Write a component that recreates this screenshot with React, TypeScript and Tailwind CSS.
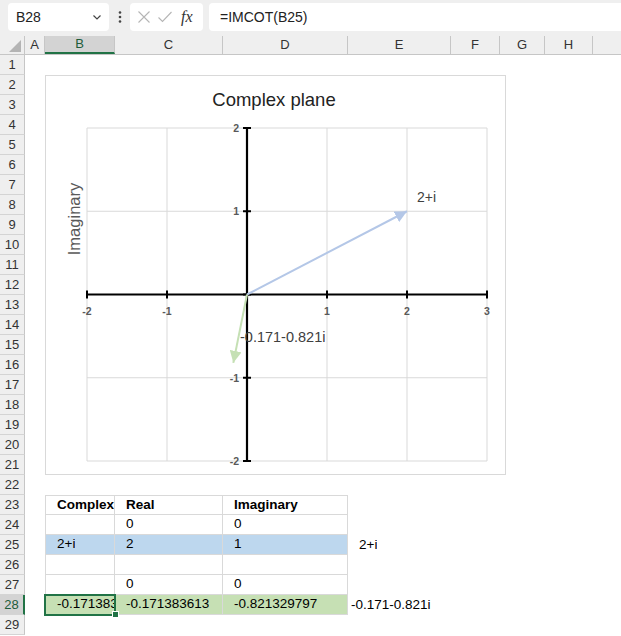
import React from "react";

const COLS = [
  { key: "A", w: 20 },
  { key: "B", w: 70 },
  { key: "C", w: 108 },
  { key: "D", w: 125 },
  { key: "E", w: 103 },
  { key: "F", w: 49 },
  { key: "G", w: 45 },
  { key: "H", w: 48 },
  { key: "I", w: 72 },
];

const colW: Record<string, string> = {
  A: "w-[20px]",
  B: "w-[70px]",
  C: "w-[108px]",
  D: "w-[125px]",
  E: "w-[103px]",
  F: "w-[49px]",
  G: "w-[45px]",
  H: "w-[48px]",
  I: "w-[72px]",
};

type Cell = { text?: string; bold?: boolean; pad?: string };
type Row = { cells: Record<string, Cell>; fill?: string; table?: boolean };

const rows: Record<number, Row> = {
  23: { table: true, cells: { B: { text: "Complex", bold: true }, C: { text: "Real", bold: true }, D: { text: "Imaginary", bold: true } } },
  24: { table: true, cells: { C: { text: "0" }, D: { text: "0" } } },
  25: { table: true, fill: "bg-[#bdd7ee]", cells: { B: { text: "2+i" }, C: { text: "2" }, D: { text: "1" }, E: { text: "2+i" } } },
  26: { table: true, cells: {} },
  27: { table: true, cells: { C: { text: "0" }, D: { text: "0" } } },
  28: {
    table: true,
    fill: "bg-[#c6e0b4]",
    cells: { B: { text: "-0.171383613" }, C: { text: "-0.171383613" }, D: { text: "-0.821329797" }, E: { text: "-0.171-0.821i", pad: "pl-[3px]" } },
  },
};

function FormulaBar() {
  return (
    <div className="flex h-[36px] items-start gap-0 bg-[#efefef] pt-[3px]">
      <div className="ml-[8px] flex h-[28px] w-[101px] items-center justify-between rounded-[4px] bg-white pl-[8px] pr-[6px] text-[14px] text-[#222]">
        <span>B28</span>
        <svg width="12" height="12" viewBox="0 0 12 12">
          <path d="M2.5 4.5 L6 8 L9.5 4.5" fill="none" stroke="#444" strokeWidth="1.2" />
        </svg>
      </div>
      <div className="flex h-[28px] w-[21px] items-center justify-center">
        <svg width="4" height="14" viewBox="0 0 4 14">
          <circle cx="2" cy="2.5" r="1.3" fill="#444" />
          <circle cx="2" cy="7" r="1.3" fill="#444" />
          <circle cx="2" cy="11.5" r="1.3" fill="#444" />
        </svg>
      </div>
      <div className="flex h-[28px] w-[73px] items-center rounded-[4px] bg-white pl-[7px]">
        <svg width="14" height="14" viewBox="0 0 14 14">
          <path d="M1.5 1.5 L12.5 12.5 M12.5 1.5 L1.5 12.5" stroke="#b5b5b5" strokeWidth="1.1" />
        </svg>
        <svg width="16" height="14" viewBox="0 0 16 14" className="ml-[6px]">
          <path d="M1.5 7.5 L5.5 11.5 L14.5 2" fill="none" stroke="#b5b5b5" strokeWidth="1.1" />
        </svg>
        <span className="ml-[8px] font-['Liberation_Serif',serif] text-[16px] italic text-[#333]">fx</span>
      </div>
      <div className="ml-[6px] flex h-[28px] flex-1 items-center rounded-l-[4px] bg-white pl-[11px] text-[14px] text-[#222]">
        =IMCOT(B25)
      </div>
    </div>
  );
}

function HeaderRow() {
  return (
    <div className="flex h-[19px] border-b border-[#c6c6c6] bg-[#efefef] text-[13px] text-[#333]">
      <div className="relative w-[25px] shrink-0 border-r border-[#c6c6c6]">
        <svg width="12" height="12" viewBox="0 0 12 12" className="absolute bottom-[2px] right-[3px]">
          <polygon points="12,0 12,12 0,12" fill="#b4b4b4" />
        </svg>
      </div>
      {COLS.map((c) => (
        <div
          key={c.key}
          className={`${colW[c.key]} flex shrink-0 items-center justify-center border-r border-[#c6c6c6] ${
            c.key === "B" ? "border-b-2 border-b-[#217346] bg-[#d3d3d3] text-[#1e5c3a]" : ""
          }`}
        >
          {/* column I starts at the window edge; its letter is out of view */}
          {c.key === "I" ? null : c.key}
        </div>
      ))}
    </div>
  );
}

function SheetRow({ n }: { n: number }) {
  const row = rows[n];
  const sel = n === 28;
  return (
    <div className="flex h-[20px]">
      <div
        className={`flex w-[25px] shrink-0 items-center justify-center border-b border-[#d4d4d4] text-[13px] ${
          sel ? "border-r-2 border-r-[#217346] bg-[#d3d3d3] text-[#1e5c3a]" : "border-r border-r-[#c6c6c6] bg-[#efefef] text-[#333]"
        }`}
      >
        {n}
      </div>
      {COLS.map((c) => {
        const cell = row?.cells[c.key];
        const inTable = row?.table && ["B", "C", "D"].includes(c.key);
        const fill = inTable && row?.fill ? row.fill : "";
        const border = inTable
          ? `border-b border-r border-[#d9d9d9] ${c.key === "B" ? "border-l" : ""} ${n === 23 ? "border-t" : ""}`
          : "";
        return (
          <div
            key={c.key}
            className={`${colW[c.key]} relative flex shrink-0 items-center overflow-hidden whitespace-nowrap text-[13.5px] text-black ${fill} ${border} ${
              cell?.pad ?? "pl-[11px]"
            } ${cell?.bold ? "font-bold" : ""}`}
          >
            {cell?.text && <span className="block min-w-0 overflow-hidden">{cell.text}</span>}
          </div>
        );
      })}
    </div>
  );
}

function Chart() {
  const ox = 201;
  const oy = 218.5;
  const ux = 80;
  const uy = 83.25;
  const xs = [-2, -1, 0, 1, 2, 3];
  const ys = [2, 1, 0, -1, -2];
  const X = (v: number) => ox + v * ux;
  const Y = (v: number) => oy - v * uy;
  return (
    <div className="absolute left-[45px] top-[20px] h-[400px] w-[461px] border border-[#d9d9d9] bg-white">
      <svg width="459" height="398" viewBox="0 0 459 398" className="block" style={{ fontFamily: "'Liberation Sans', Arial, sans-serif" }}>
        <defs>
          <marker id="ab" markerUnits="userSpaceOnUse" markerWidth="13" markerHeight="12" refX="12" refY="6" orient="auto">
            <polygon points="0,0 12,6 0,12" fill="#b4c7e7" />
          </marker>
          <marker id="ag" markerUnits="userSpaceOnUse" markerWidth="13" markerHeight="12" refX="12" refY="6" orient="auto">
            <polygon points="0,0 12,6 0,12" fill="#c5e0b4" />
          </marker>
        </defs>
        <text x="228" y="30" fontSize="18.5" fill="#222" textAnchor="middle">
          Complex plane
        </text>
        <text x="0" y="0" fontSize="16.5" fill="#595959" textAnchor="middle" transform="translate(34 143) rotate(-90)">
          Imaginary
        </text>
        {xs.map((v) => (
          <line key={"gx" + v} x1={X(v)} x2={X(v)} y1={Y(2)} y2={Y(-2)} stroke="#d9d9d9" strokeWidth="1" />
        ))}
        {ys.map((v) => (
          <line key={"gy" + v} x1={X(-2)} x2={X(3)} y1={Y(v)} y2={Y(v)} stroke="#d9d9d9" strokeWidth="1" />
        ))}
        <line x1={X(-2)} x2={X(3)} y1={oy} y2={oy} stroke="#000" strokeWidth="2.2" />
        <line x1={ox} x2={ox} y1={Y(2)} y2={Y(-2)} stroke="#000" strokeWidth="2.2" />
        {xs.map((v) => (
          <line key={"tx" + v} x1={X(v)} x2={X(v)} y1={oy - 4} y2={oy + 4} stroke="#000" strokeWidth="2" />
        ))}
        {ys.map((v) => (
          <line key={"ty" + v} x1={ox - 4} x2={ox + 4} y1={Y(v)} y2={Y(v)} stroke="#000" strokeWidth="2" />
        ))}
        {xs
          .filter((v) => v !== 0)
          .map((v) => (
            <text key={"lx" + v} x={X(v)} y={oy + 20} fontSize="10.5" fontWeight="bold" fill="#595959" textAnchor="middle">
              {v}
            </text>
          ))}
        {ys
          .filter((v) => v !== 0)
          .map((v) => (
            <text key={"ly" + v} x={ox - 8} y={Y(v) + 4} fontSize="10.5" fontWeight="bold" fill="#595959" textAnchor="end">
              {v}
            </text>
          ))}
        <line x1={ox} y1={oy} x2={X(2)} y2={Y(1)} stroke="#b4c7e7" strokeWidth="2" markerEnd="url(#ab)" />
        <line x1={ox} y1={oy} x2={X(-0.171)} y2={Y(-0.821)} stroke="#c5e0b4" strokeWidth="2" markerEnd="url(#ag)" />
        <text x="371" y="126" fontSize="14" fill="#404040">
          2+i
        </text>
        <text x="194" y="266" fontSize="14.5" fill="#404040">
          -0.171-0.821i
        </text>
      </svg>
    </div>
  );
}

export default function App() {
  const nums = Array.from({ length: 29 }, (_, i) => i + 1);
  return (
    <div className="h-[636px] w-[621px] overflow-hidden bg-white font-['Liberation_Sans',Arial,sans-serif]">
      <FormulaBar />
      <HeaderRow />
      <div className="relative">
        {nums.map((n) => (
          <SheetRow key={n} n={n} />
        ))}
        <Chart />
        {/* selected cell B28 */}
        <div className="pointer-events-none absolute left-[44px] top-[539px] h-[22px] w-[72px] border-2 border-[#217346]" />
        <div className="pointer-events-none absolute left-[112px] top-[556px] h-[7px] w-[7px] border border-white bg-[#217346]" />
      </div>
    </div>
  );
}
